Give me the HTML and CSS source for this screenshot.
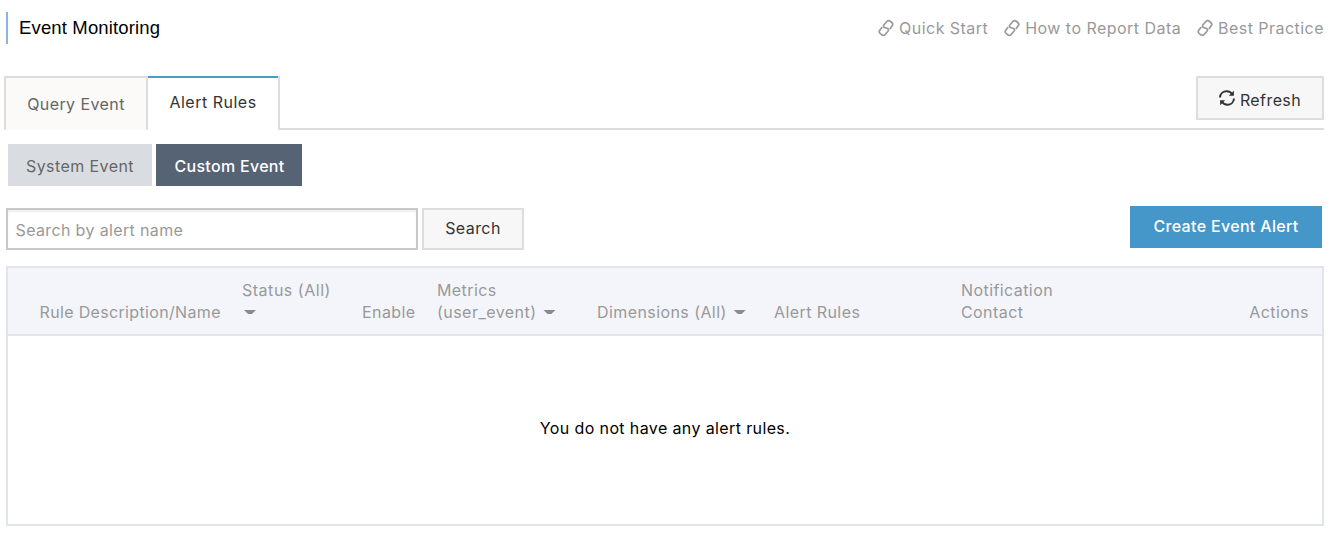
FILE: index.html
```html
<!DOCTYPE html>
<html lang="en">
<head>
<meta charset="utf-8">
<title>Event Monitoring</title>
<link rel="stylesheet" href="styles.css">
</head>
<body>
<svg class="defs" width="0" height="0">
  <symbol id="link" viewBox="0 0 16 18">
    <path fill="none" stroke="currentColor" stroke-width="1.7" stroke-linecap="round" stroke-linejoin="round" d="M12.200 9.400 14 7.100C15 5.900 14.900 4.500 13.800 3.500L12.500 2.300C11.300 1.200 9.900 1.300 8.900 2.500L6.200 5.500C5.200 6.700 5.300 7.700 6.300 8.500L9.700 9.500C10.700 10.300 10.800 11.300 9.800 12.500L7.100 15.500C6.100 16.700 4.700 16.800 3.500 15.700L2.200 14.500C1.100 13.500 1 12.100 2 10.900L3.800 8.600"/>
  </symbol>
</svg>
<header class="header">
  <h1 class="title">Event Monitoring</h1>
  <nav class="links">
    <a class="link"><svg class="link-icon"><use href="#link"/></svg><span>Quick Start</span></a>
    <a class="link"><svg class="link-icon"><use href="#link"/></svg><span>How to Report Data</span></a>
    <a class="link"><svg class="link-icon"><use href="#link"/></svg><span>Best Practice</span></a>
  </nav>
</header>
<div class="tabs">
  <div class="tab"><span>Query Event</span></div>
  <div class="tab tab-active"><span>Alert Rules</span></div>
  <div class="tabs-rest">
    <button class="button refresh">
      <svg class="refresh-icon" viewBox="0 0 16 16">
        <g fill="none" stroke="currentColor" stroke-width="2"><path d="M1 7.500C1.200 3.700 4.200 1.300 7.600 1.300c2.400 0 4.300 1 5.600 2.900"/><path d="M15 8.500c-.2 3.800-3.200 6.200-6.600 6.200-2.400 0-4.300-1-5.600-2.900"/></g>
        <path fill="currentColor" d="M14.900.7v5.100H9.800zM1.100 15.300v-5.100h5.100z"/>
      </svg><span>Refresh</span>
    </button>
  </div>
</div>
<div class="segments">
  <div class="segment segment-system"><span>System Event</span></div>
  <div class="segment segment-custom"><span>Custom Event</span></div>
</div>
<div class="toolbar">
  <input class="search-input" type="text" placeholder="Search by alert name">
  <button class="button search-button"><span>Search</span></button>
  <button class="create"><span>Create Event Alert</span></button>
</div>
<section class="table">
  <div class="table-head">
    <div class="cell cell-name"><span>Rule Description/Name</span></div>
    <div class="cell cell-status"><span>Status (All)</span><div class="line"><i class="caret"></i></div></div>
    <div class="cell"><span>Enable</span></div>
    <div class="cell"><span>Metrics</span><div class="line"><span class="metric">(user_event)</span><i class="caret"></i></div></div>
    <div class="cell"><div class="line"><span>Dimensions (All)</span><i class="caret"></i></div></div>
    <div class="cell"><span>Alert Rules</span></div>
    <div class="cell"><span>Notification</span><span>Contact</span></div>
    <div class="cell cell-actions"><span>Actions</span></div>
  </div>
  <div class="empty"><span>You do not have any alert rules.</span></div>
</section>
</body>
</html>
```
FILE: styles.css
```css
* { box-sizing: border-box; }
body {
  margin: 0;
  padding: 12px 8px 0 6px;
  background: #fff;
  color: #000;
  font: 16px/22px Inter, "Liberation Sans", sans-serif;
  letter-spacing: 0.42px;
}
.defs { display: block; }
.header { display: flex; justify-content: space-between; height: 64px; }
.title {
  margin: 0;
  height: 32px;
  padding-left: 11px;
  border-left: 2px solid #8fb2de;
  font: 400 18.5px/31px "Liberation Sans", sans-serif;
  letter-spacing: 0.15px;
}
.links { display: flex; gap: 16px; height: 32px; color: #999; letter-spacing: 0.46px; }
.link { display: flex; align-items: center; gap: 5px; }
.link-icon { width: 16px; height: 18px; }
.tabs { display: flex; height: 54px; margin-left: -2px; }
.tab {
  display: flex;
  align-items: center;
  justify-content: center;
  width: 142px;
  border: 2px solid #ddd;
  border-width: 2px 0 0 2px;
  background: #fbfaf8;
  color: #666;
}
.tab-active {
  width: 134px;
  padding-bottom: 2px;
  border-width: 0 2px;
  background: linear-gradient(#459fc5, #459fc5) top / 100% 2px no-repeat #fff;
  color: #333;
  letter-spacing: 0.5px;
}
.tabs-rest { flex: 1; display: flex; justify-content: flex-end; border-bottom: 2px solid #ddd; }
.button, .create { margin: 0; padding: 0; font: inherit; letter-spacing: inherit; border-radius: 0; }
.button { border: 2px solid #ddd; background: #f7f7f7; color: #333; }
.refresh { display: flex; align-items: center; justify-content: center; gap: 5px; width: 128px; height: 44px; padding-top: 4px; }
.refresh-icon { width: 16px; height: 16px; margin-top: -4px; }
.segments { display: flex; gap: 4px; margin: 14px 0 0 2px; }
.segment { width: 144px; height: 42px; padding-top: 2px; line-height: 41px; text-align: center; background: #d9dde2; color: #666; }
.segment-custom { width: 146px; padding-left: 1px; background: #566374; color: #fff; font-weight: 500; letter-spacing: 0.3px; }
.toolbar { display: flex; align-items: flex-end; height: 44px; margin-top: 20px; }
.search-input {
  width: 412px;
  height: 42px;
  margin: 0 4px 0 0;
  padding: 2px 7.5px 0;
  border: 2px solid #c8c8c8;
  border-radius: 0;
  box-shadow: inset 0 2px 2px #eee;
  font: inherit;
  letter-spacing: 0.36px;
}
.search-input::placeholder { color: #999; opacity: 1; }
.search-button { width: 102px; height: 42px; padding-bottom: 2px; }
.create { align-self: flex-start; width: 192px; height: 42px; margin: 0 2px 0 auto; padding-bottom: 2px; border: 0; background: #4497c8; color: #fff; font-weight: 500; letter-spacing: 0.33px; }
.table { height: 260px; margin-top: 16px; border: 2px solid #e1e4e9; }
.table-head {
  display: grid;
  grid-template-columns: 202px 120px 75px 160px 177px 187px 200px 1fr;
  align-items: end;
  height: 68px;
  padding: 0 13px 11px 32px;
  border-bottom: 2px solid #e1e4e9;
  background: #f4f5fa;
  color: #999;
}
.cell { display: flex; flex-direction: column; align-items: flex-start; white-space: nowrap; }
.cell-name { margin-left: -0.5px; letter-spacing: 0.34px; }
.cell-status { letter-spacing: 0.52px; }
.metric { letter-spacing: 0.46px; }
.cell-actions { align-items: flex-end; }
.line { display: flex; align-items: center; gap: 5px; height: 22px; }
.caret { width: 12px; height: 4px; margin-left: 2px; background: #8b8b8b; clip-path: polygon(0 0, 100% 0, 66% 100%, 34% 100%); }
.empty { padding-top: 81px; text-align: center; letter-spacing: 0.38px; }
```
